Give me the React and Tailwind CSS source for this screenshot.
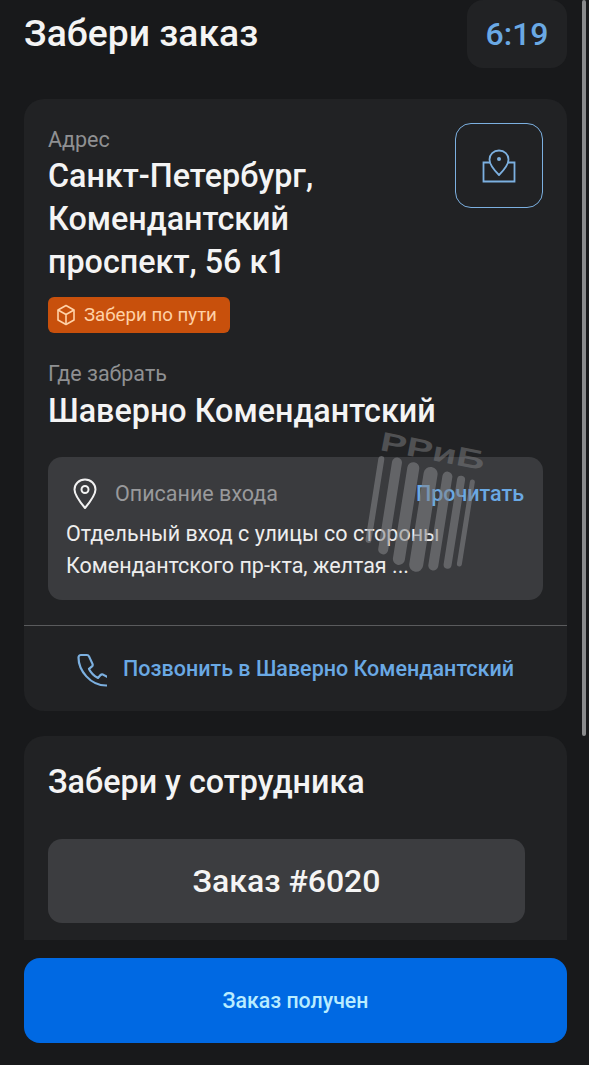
const MapPinBoxIcon = () => (
    <svg width="34" height="34" viewBox="0 0 34 34" fill="none" stroke="#7cb0e0" strokeWidth="1.800">
        <path d="M17 1.500C11.500 1.500 7.500 5.500 7.500 10.500 7.500 15.500 12.500 21.500 17 26 21.500 21.500 26.500 15.500 26.500 10.500 26.500 5.500 22.500 1.500 17 1.500z" strokeLinejoin="round" />
        <circle cx="17" cy="10" r="2" fill="#7cb0e0" stroke="none" />
        <path d="M8 13.500H1.500V32.500H32.500V13.500H26" />
    </svg>
)

const BoxIcon = () => (
    <svg width="20" height="22" viewBox="0 0 20 22" fill="none" stroke="#ffd2a8" strokeWidth="1.600" strokeLinejoin="round">
        <path d="M10 1.500l8 4.500v10l-8 4.500-8-4.500V6z" />
        <path d="M2 6l8 4.500L18 6M10 10.500v10" />
    </svg>
)

const PinIcon = () => (
    <svg width="24" height="32" viewBox="0 0 24 32" fill="none" stroke="#f2f2f2" strokeWidth="2">
        <path d="M12 1.500C6 1.500 1.500 6 1.500 11.500c0 5.500 5.500 12.500 10.500 18.500 5-6 10.500-13 10.500-18.500C22.500 6 18 1.500 12 1.500z" strokeLinejoin="round" />
        <circle cx="12" cy="11.500" r="3.500" />
    </svg>
)

const PhoneIcon = () => (
    <svg width="30" height="34" viewBox="0 0 30 34" fill="none" stroke="#7cb0e0" strokeWidth="2.200" strokeLinejoin="round">
        <path d="M4 2h6c1 0 1.600.5 2 1.400l3.500 7.500c.4 1 .2 1.800-.5 2.500l-3 2.500c2 4 5 7 9 9l2.500-2.800c.7-.7 1.600-.9 2.500-.5l5 2.800c1 .5 1.500 1.300 1.500 2.300v3.500c0 1.500-1 2.300-2.500 2.300C13 33 1.500 17 1.500 4.500 1.500 3 2.500 2 4 2z" />
    </svg>
)

const Watermark = () => (
    <svg width="144" height="170" viewBox="0 0 144 170" className="absolute left-[354px] top-[414px] opacity-55 pointer-events-none">
        <text x="25" y="36" fontFamily="Liberation Sans, sans-serif" fontWeight="700" fontSize="27" fill="#77787a" textLength="106" lengthAdjust="spacingAndGlyphs" transform="rotate(11 25 36)">РРиБ</text>
        <g fill="#85868a" transform="rotate(9 68 95)">
            <rect x="17" y="49" width="6" height="88" rx="3" />
            <rect x="31" y="48" width="10" height="98" rx="5" />
            <rect x="47" y="50" width="12" height="104" rx="6" />
            <rect x="64" y="52" width="14" height="106" rx="7" />
            <rect x="83" y="54" width="10" height="100" rx="5" />
            <rect x="98" y="56" width="8" height="94" rx="4" />
            <rect x="111" y="58" width="5" height="88" rx="2.500" />
        </g>
    </svg>
)

export default function App() {
    return (
        <div className="relative flex h-screen w-full flex-col overflow-hidden bg-[#18191b] font-['Roboto',sans-serif] text-[#f4f4f4]">
            {/* scroll thumb */}
            <div className="absolute right-[3px] top-0 h-[736px] w-[4px] rounded-full bg-[#8a8b8d]" />

            <div className="min-h-0 flex-1 overflow-hidden pl-6 pr-[22px]">
                <div className="flex h-[68px] items-center justify-between">
                    <h1 className="text-[37.3px] font-medium leading-none">Забери заказ</h1>
                    <div className="flex h-[68px] w-[100px] items-center justify-center rounded-2xl bg-[#212224] text-[32px] font-medium text-[#6aa9e4]">6:19</div>
                </div>

                <div className="mt-[31px] rounded-[20px] bg-[#212224]">
                    <div className="px-6 pt-6">
                        <div className="flex items-start justify-between">
                            <div className="w-[340px]">
                                <div className="h-[34px] text-[21.5px] leading-[34px] text-[#8f9092]">Адрес</div>
                                <div className="-mt-[2px] text-[32.3px] font-medium leading-[43px]">Санкт-Петербург, Комендантский проспект, 56 к1</div>
                            </div>
                            <button className="flex h-[85px] w-[88px] items-center justify-center rounded-2xl border-[1.5px] border-[#7cb0e0]">
                                <MapPinBoxIcon />
                            </button>
                        </div>

                        <div className="mt-[13px] inline-flex h-[36px] w-[182px] items-center gap-2 rounded-md bg-[#c8500c] pl-2 text-[18.7px] text-[#ffd1a6]">
                            <BoxIcon />
                            <span>Забери по пути</span>
                        </div>

                        <div className="mt-[25px] text-[21.5px] leading-[32px] text-[#8f9092]">Где забрать</div>
                        <div className="text-[32.3px] font-medium leading-[42px]">Шаверно Комендантский</div>

                        <div className="mt-[25px] h-[143px] rounded-[14px] bg-[#3a3b3e] pl-[18px] pr-[19px] pt-[21px]">
                            <div className="flex h-[32px] items-center">
                                <div className="ml-[7px]"><PinIcon /></div>
                                <span className="ml-[18px] text-[21.5px] text-[#98999b]">Описание входа</span>
                                <span className="ml-auto text-[21.5px] font-medium text-[#6aa9e4]">Прочитать</span>
                            </div>
                            <p className="mt-2 text-[21.5px] leading-[32px] text-[#ededed]">Отдельный вход с улицы со стороны<br />Комендантского пр-кта, желтая ...</p>
                        </div>
                    </div>

                    <div className="mt-[25px] h-px bg-[#5a5b5d]" />

                    <div className="flex h-[85px] items-center justify-center gap-4 pt-[2px]">
                        <PhoneIcon />
                        <span className="text-[21.5px] font-medium text-[#6aa9e4]">Позвонить в Шаверно Комендантский</span>
                    </div>
                </div>

                <div className="mt-[25px] rounded-t-[20px] bg-[#212224] px-6 pb-6 pt-6">
                    <div className="text-[32.3px] font-medium leading-[44px]">Забери у сотрудника</div>
                    <div className="mt-[35px] flex h-[84px] w-[477px] items-center justify-center rounded-[14px] bg-[#3c3d40] text-[32px] font-medium">Заказ #6020</div>
                </div>
            </div>

            <div className="h-[125px] shrink-0 bg-[#18191b] pl-6 pt-[18px]">
                <button className="flex h-[85px] w-[543px] items-center justify-center rounded-2xl bg-[#0069e3] text-[21.3px] font-medium text-[#b9ecff]">Заказ получен</button>
            </div>

            <Watermark />
        </div>
    )
}
